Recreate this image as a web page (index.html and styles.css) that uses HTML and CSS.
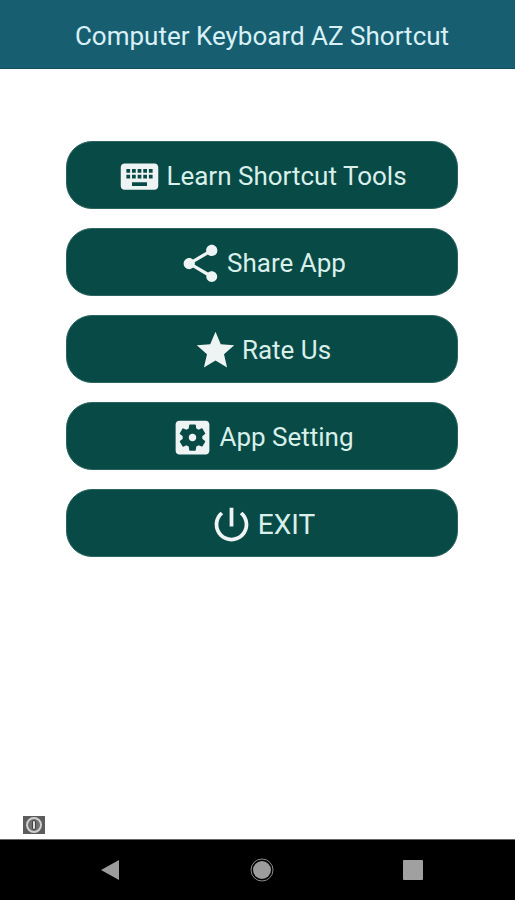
FILE: index.html
```html
<!DOCTYPE html>
<html lang="en">

<head>
    <meta charset="UTF-8">
    <meta name="viewport" content="width=device-width, initial-scale=1.0">
    <title>Computer Keyboard AZ Shortcut</title>
    <link rel="stylesheet" href="styles.css">
</head>

<body>
    <header class="app-bar">
        <h1>Computer Keyboard AZ Shortcut</h1>
    </header>

    <main class="menu">
        <button class="menu-btn" type="button">
            <svg class="icon" viewBox="0 0 24 24" aria-hidden="true">
                <path d="M20 5H4c-1.100 0-1.990.9-1.990 2L2 17c0 1.100.9 2 2 2h16c1.100 0 2-.9 2-2V7c0-1.100-.9-2-2-2zm-9 3h2v2h-2V8zm0 3h2v2h-2v-2zM8 8h2v2H8V8zm0 3h2v2H8v-2zm-1 2H5v-2h2v2zm0-3H5V8h2v2zm9 7H8v-2h8v2zm0-4h-2v-2h2v2zm0-3h-2V8h2v2zm3 3h-2v-2h2v2zm0-3h-2V8h2v2z"/>
            </svg>
            <span>Learn Shortcut Tools</span>
        </button>
        <button class="menu-btn" type="button">
            <svg class="icon" viewBox="0 0 24 24" aria-hidden="true">
                <path d="M18 16.080c-.76 0-1.440.3-1.960.77L8.910 12.700c.05-.23.09-.46.09-.7s-.04-.47-.09-.7l7.050-4.110c.54.5 1.250.81 2.040.81 1.660 0 3-1.340 3-3s-1.340-3-3-3-3 1.340-3 3c0 .24.04.47.09.7L8.040 9.810C7.500 9.310 6.790 9 6 9c-1.660 0-3 1.340-3 3s1.340 3 3 3c.79 0 1.500-.31 2.040-.81l7.120 4.160c-.05.21-.08.43-.08.65 0 1.610 1.310 2.920 2.920 2.920s2.920-1.310 2.920-2.920-1.310-2.920-2.920-2.920z"/>
            </svg>
            <span>Share App</span>
        </button>
        <button class="menu-btn" type="button">
            <svg class="icon" viewBox="0 0 24 24" aria-hidden="true">
                <path d="M12 17.270L18.180 21l-1.640-7.030L22 9.240l-7.190-.61L12 2 9.190 8.630 2 9.240l5.460 4.730L5.820 21z"/>
            </svg>
            <span>Rate Us</span>
        </button>
        <button class="menu-btn" type="button">
            <svg class="icon" viewBox="0 0 24 24" aria-hidden="true">
                <path d="M12 10c-1.100 0-2 .9-2 2s.9 2 2 2 2-.9 2-2-.9-2-2-2zm7-7H5c-1.110 0-2 .9-2 2v14c0 1.100.89 2 2 2h14c1.110 0 2-.9 2-2V5c0-1.100-.89-2-2-2zm-1.750 9c0 .23-.02.46-.05.68l1.480 1.160c.13.110.17.3.08.45l-1.400 2.420c-.09.15-.27.210-.43.150l-1.740-.7c-.36.28-.76.510-1.180.69l-.26 1.850c-.03.17-.18.3-.35.3h-2.800c-.17 0-.32-.13-.35-.29l-.26-1.850c-.43-.18-.82-.41-1.180-.69l-1.740.7c-.16.06-.34 0-.43-.15l-1.400-2.420c-.09-.15-.05-.34.08-.45l1.480-1.160c-.03-.23-.05-.46-.05-.69 0-.23.02-.46.05-.68l-1.480-1.160c-.13-.11-.17-.3-.08-.45l1.400-2.420c.09-.15.27-.21.43-.15l1.740.7c.36-.28.76-.51 1.180-.69l.26-1.850c.03-.17.18-.3.35-.3h2.800c.17 0 .32.13.35.29l.26 1.850c.43.18.82.41 1.180.69l1.740-.7c.16-.06.34 0 .43.15l1.400 2.420c.09.15.05.34-.08.45l-1.480 1.160c.03.23.05.46.05.69z"/>
            </svg>
            <span>App Setting</span>
        </button>
        <button class="menu-btn exit" type="button">
            <svg class="icon" viewBox="0 0 24 24" aria-hidden="true">
                <path d="M13 3h-2v10h2V3zm4.830 2.170l-1.420 1.420C17.990 7.860 19 9.810 19 12c0 3.870-3.130 7-7 7s-7-3.130-7-7c0-2.190 1.010-4.140 2.580-5.420L6.170 5.170C4.230 6.820 3 9.260 3 12c0 4.970 4.030 9 9 9s9-4.030 9-9c0-2.740-1.230-5.180-3.170-6.830z"/>
            </svg>
            <span>EXIT</span>
        </button>
    </main>

    <!-- ad info -->
    <div class="ad-row">
        <button class="ad-info" type="button" aria-label="Ad information">
            <svg viewBox="0 0 22 18" aria-hidden="true">
                <rect width="22" height="18" fill="#5c5c5c"/>
                <circle cx="11" cy="9" r="7" fill="#707070" stroke="#d0d0d0" stroke-width="2"/>
                <rect x="9" y="4" width="4" height="10" rx="2" fill="#444"/>
                <rect x="10" y="5" width="2" height="8" rx="1" fill="#e0e0e0"/>
            </svg>
        </button>
    </div>

    <!-- system navigation -->
    <nav class="nav-bar">
        <button type="button" aria-label="Back">
            <svg viewBox="0 0 24 24" aria-hidden="true">
                <path d="M2 12L20 2v20z" fill="#9c9c9c"/>
            </svg>
        </button>
        <button type="button" aria-label="Home">
            <svg viewBox="0 0 24 24" aria-hidden="true">
                <circle cx="12" cy="12" r="11" fill="none" stroke="#8a8a8a"/>
                <circle cx="12" cy="12" r="9" fill="#9c9c9c"/>
            </svg>
        </button>
        <button type="button" aria-label="Recent apps">
            <svg viewBox="0 0 24 24" aria-hidden="true">
                <rect x="2" y="2" width="20" height="20" rx="1" fill="#a0a0a0"/>
            </svg>
        </button>
    </nav>
</body>

</html>
```

FILE: styles.css
```css
body {
    margin: 0;
    min-height: 100vh;
    display: flex;
    flex-direction: column;
    font-family: Roboto, "Liberation Sans", sans-serif;
    background-color: #fff;
}

button {
    padding: 0;
    border: none;
    background: none;
    font-family: inherit;
    cursor: pointer;
}

.app-bar {
    padding: 21px 0 16px 9px;
    background-color: #175f70;
    border-bottom: 1px solid #0e5060;
    text-align: center;
}

h1 {
    margin: 0;
    font-size: 26px;
    font-weight: 400;
    line-height: 31px;
    color: #d8f0f6;
}

.menu {
    flex: 1;
    display: flex;
    flex-direction: column;
    gap: 19px;
    padding: 72px 57px 0 66px;
}

.menu-btn {
    display: flex;
    align-items: center;
    justify-content: center;
    gap: 4px;
    height: 68px;
    padding-top: 2px;
    box-sizing: border-box;
    border: 1px solid #2c6460;
    border-radius: 26px;
    background-color: #084a46;
    font-size: 26px;
    color: #d9efea;
}

.menu-btn:hover {
    background-color: #0b5751;
}

.exit {
    font-size: 28px;
}

.icon {
    width: 45px;
    height: 45px;
    fill: #eef3f3;
}

.ad-row {
    display: flex;
    padding: 0 23px 5px;
}

.ad-info svg {
    display: block;
    width: 22px;
    height: 18px;
}

.nav-bar {
    display: flex;
    justify-content: space-between;
    padding: 18px 90px 18px 99px;
    background-color: #000;
    border-top: 1px solid #666;
}

.nav-bar svg {
    display: block;
    width: 24px;
    height: 24px;
}
```
